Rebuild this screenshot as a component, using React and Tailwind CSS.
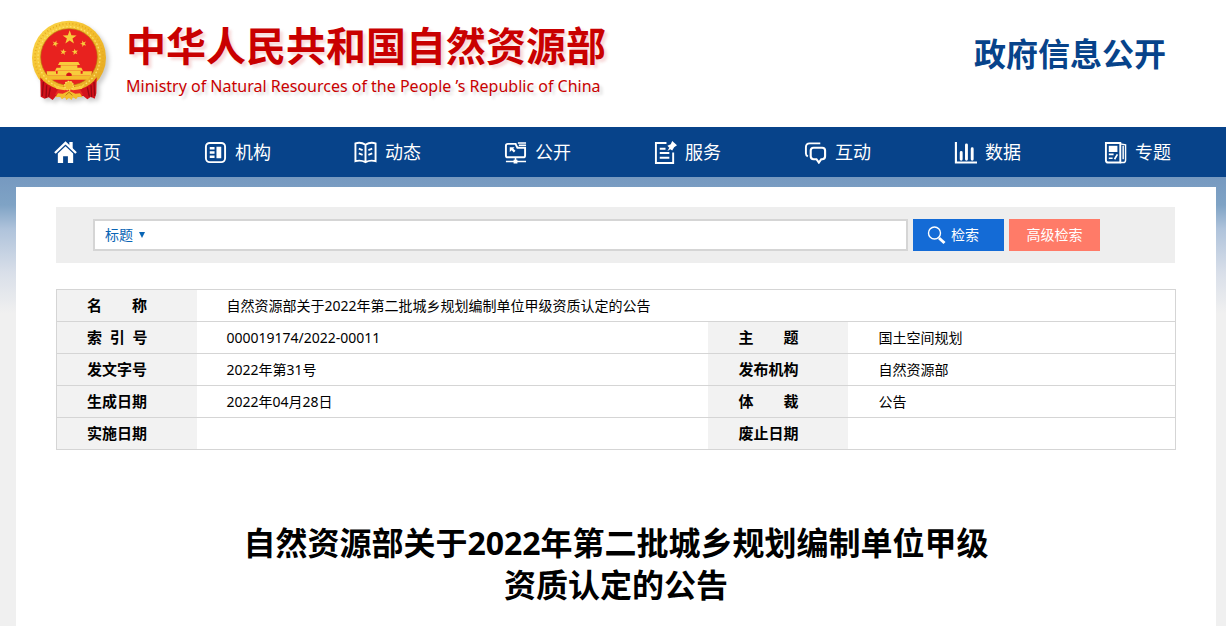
import React, { useState } from 'react';

const STAR = '0,-10 2.4,-3.2 9.5,-3.1 3.8,1.2 5.9,8.1 0,4 -5.9,8.1 -3.8,1.2 -9.5,-3.1 -2.4,-3.2';

const Emblem = () => (
  <svg className="w-20 h-[84px] shrink-0 drop-shadow-[3px_3px_2px_rgba(0,0,0,0.2)]" viewBox="30 24 240 252" aria-hidden="true">
    <defs>
      <linearGradient id="gold" x1="0" y1="0" x2="1" y2="1">
        <stop offset="0" stopColor="#fbd84a" />
        <stop offset="0.5" stopColor="#f3bd2c" />
        <stop offset="1" stopColor="#e3a522" />
      </linearGradient>
    </defs>
    <circle cx="147" cy="143" r="111" fill="url(#gold)" />
    <circle cx="147" cy="143" r="102" fill="none" stroke="#e5ab25" strokeWidth="5" strokeDasharray="3 7" />
    <circle cx="147" cy="143" r="93" fill="none" stroke="#fce06a" strokeWidth="4" strokeDasharray="5 6" />
    <circle cx="147" cy="141" r="85" fill="#e8221f" stroke="#b8780f" strokeWidth="2" />
    <polygon points={STAR} transform="translate(149 83) scale(2.2)" fill="#f8cc3c" />
    <polygon points={STAR} transform="translate(106 101) rotate(20)" fill="#f8cc3c" />
    <polygon points={STAR} transform="translate(190 101) rotate(-20)" fill="#f8cc3c" />
    <polygon points={STAR} transform="translate(130 126) rotate(10)" fill="#f8cc3c" />
    <polygon points={STAR} transform="translate(165 126) rotate(-10)" fill="#f8cc3c" />
    <path d="M119 156h56l5 9h-66z M122 166h50v8h-50z M110 173h74l5 9h-84z M113 183h69v12h-69z M80 184h28v7h80v-7h28l-3 13H82z" fill="#f8cc3c" />
    <path d="M82 198h130l-8 11H91z" fill="#f3bd2c" />
    <path d="M139 198v-6q8-9 16 0v6z" fill="#d3121b" />
    <path d="M61 202Q78 226 112 236L147 224 184 236Q216 226 230 202L229 250 224 266 213 260 202 268 190 258 147 262 108 258 98 270 86 262 74 266 62 260Z" fill="#d3121b" />
    <path d="M70 216l-3 42M80 226l-2 38M91 232l-5 28M222 216l2 42M213 226l2 36M202 232l6 28" stroke="#980811" strokeWidth="4" fill="none" />
    <path d="M113 240q34-16 68 0l8 14-22 8h-40l-22-8z" fill="#ea2a22" />
    <path d="M100 222q16 12 33 8l3-12q11-9 22 0l3 12q18 4 34-8l-10 15-26 4-12-6-12 6-25-4z" fill="#f8cc3c" />
    <circle cx="147" cy="227" r="13" fill="#f3bd2c" stroke="#fce06a" strokeWidth="4" strokeDasharray="4 4" />
    <path d="M106 262l8-12 14 1 19-9 19 9 14-1 8 12-14-2-6 8-9-7-4 9-8-6-8 6-4-9-9 7-6-8z" fill="#f3bd2c" />
    <path d="M137 256l10-9 10 9" stroke="#b8780f" strokeWidth="3" fill="none" />
  </svg>
);

const NavIcon = ({ children }) => (
  <svg className="size-[23px] shrink-0" viewBox="0 0 24 24" fill="none" stroke="white" strokeWidth="2" aria-hidden="true">
    {children}
  </svg>
);

const navItems = [
  {
    label: '首页',
    icon: (
      <>
        <path d="M1 12.500 12 2l11 10.500" strokeWidth="2.400" />
        <path d="M16 1h3.500v8L16 6z" fill="white" stroke="none" />
        <path d="M12 5.500 20 13v10h-5.500v-7h-5v7H4V13z" fill="white" stroke="none" />
      </>
    ),
  },
  {
    label: '机构',
    icon: (
      <>
        <rect x="2" y="2" width="20" height="20" rx="4" />
        <path d="M6 7.500h5M6 12h5M6 16.500h5" strokeWidth="2.500" />
        <path d="M13 6h5v12h-5z" fill="white" stroke="none" />
      </>
    ),
  },
  {
    label: '动态',
    icon: (
      <>
        <path d="M12 4Q7 0.500 1.500 2.500V21q5.500-1.500 10.500 1 5-2.500 10.500-1V2.500Q17 0.500 12 4zV22" />
        <path d="M5 8l4 1.500M5 13l4 1.500M19 8l-4 1.500M19 13l-4 1.500" />
      </>
    ),
  },
  {
    label: '公开',
    icon: (
      <>
        <path d="M13 3H4Q2 3 2 5v10q0 2 2 2h16q2 0 2-2V7h-8l-2-4" />
        <path d="M14.500 2H23M15.500 4.500H23" strokeWidth="1.600" />
        <path d="M6 6.500h5L9.700 8 12 10.300 10.300 12 8 9.700 6 11.500z" fill="white" stroke="none" />
        <path d="M12 17v4M2 21.500h21" strokeWidth="1.600" />
        <path d="M10 19.500h4v4h-4z" fill="white" stroke="none" />
      </>
    ),
  },
  {
    label: '服务',
    icon: (
      <>
        <path d="M13 2H2v21h18V12" />
        <path d="M6 8h6M6 12.500h10M6 17.500h10" />
        <path d="M19 0l5 4.500-3 2-2 3.500-2-1.500-3 2 2-3.500-2-2 3.500-1.500z" fill="white" stroke="none" />
      </>
    ),
  },
  {
    label: '互动',
    icon: (
      <>
        <path d="M17 2.500H6q-4 0-4 4V13q0 2 2 3" />
        <path d="M10 7h9q3 0 3 3v6q0 3-3 3h-1l-2.500 3.500L13 19h-3q-3 0-3-3v-6q0-3 3-3z" strokeWidth="2.200" />
      </>
    ),
  },
  {
    label: '数据',
    icon: (
      <>
        <path d="M2 1v21.500h22" strokeWidth="2.200" />
        <path d="M7.500 12v7M13 4v15M19 8v11" strokeWidth="3" strokeLinecap="round" />
      </>
    ),
  },
  {
    label: '专题',
    icon: (
      <>
        <path d="M2 2h15v20.500H4.500q-2.500 0-2.500-2.500V2z" />
        <path d="M17 3l5.500 1v16q0 2.500-2.500 2.500h-3M20 5v14" strokeWidth="1.500" />
        <path d="M5 5h9v6.500H5z" fill="white" stroke="none" />
        <path d="M5 14h5M5 18h4M11 19l3-5" strokeWidth="1.800" />
      </>
    ),
  },
];

const rows = [
  ['索\u00a0 引\u00a0 号', '000019174/2022-00011', '主　　题', '国土空间规划'],
  ['发文字号', '2022年第31号', '发布机构', '自然资源部'],
  ['生成日期', '2022年04月28日', '体　　裁', '公告'],
  ['实施日期', '', '废止日期', ''],
];

const Label = ({ children }) => (
  <th scope="row" className="bg-[#f2f2f2] pl-[30px] text-left text-[15px] font-bold">
    {children}
  </th>
);

const App = () => {
  const [keyword, setKeyword] = useState('');

  return (
    <div className="min-h-screen bg-[#f0f0f0] font-['Noto_Sans','Noto_Sans_CJK_SC',sans-serif] text-black">
      <header className="flex items-start justify-between bg-white pt-[18px] pr-[60px] pb-[25px] pl-[30px]">
        <div className="flex items-center gap-4">
          <Emblem />
          <div className="pt-1 text-[#c90000]">
            <h1 className="text-[40px] leading-[48px] font-bold whitespace-nowrap [text-shadow:3px_3px_3px_rgba(201,0,0,0.15)]">
              中华人民共和国自然资源部
            </h1>
            <p className="text-base leading-8 whitespace-nowrap [text-shadow:3px_3px_3px_rgba(0,0,0,0.15)]">
              Ministry of Natural Resources of the People ’s Republic of China
            </p>
          </div>
        </div>
        <p className="pt-4 text-[32px] leading-10 font-bold whitespace-nowrap text-[#07438a]">政府信息公开</p>
      </header>

      <nav className="bg-[#07438a] pr-2.5 pl-4">
        <ul className="grid grid-cols-8">
          {navItems.map((item) => (
            <li key={item.label}>
              <a href="#" className="flex h-[50px] items-center gap-2 pl-[38px] text-lg text-white">
                <NavIcon>{item.icon}</NavIcon>
                <span>{item.label}</span>
              </a>
            </li>
          ))}
        </ul>
      </nav>

      <div className="bg-[linear-gradient(to_bottom,#7699c0_0px,#7fa3c5_28px,#afc3db_52px,#d9dfe9_96px,#f0f0f0_136px)] pt-2.5 pr-2.5 pl-4">
        <main className="bg-white px-10 pt-5 pb-5">
          <form
            className="mr-px flex h-14 items-center bg-[#eeeeee] pr-[75px] pl-[37px]"
            onSubmit={(e) => e.preventDefault()}
          >
            <div className="flex h-8 flex-1 items-center border-2 border-[#d5d5d5] bg-white">
              <div className="relative flex items-center">
                <select
                  aria-label="检索字段"
                  className="w-14 appearance-none bg-transparent pl-2.5 text-sm text-[#0965b5] outline-none"
                >
                  <option>标题</option>
                </select>
                <svg className="pointer-events-none absolute right-1.5 h-1.5 w-1.5" viewBox="0 0 6 6" aria-hidden="true">
                  <path d="M0 0h6L3 6z" fill="#0965b5" />
                </svg>
              </div>
              <input
                type="text"
                aria-label="检索词"
                value={keyword}
                onChange={(e) => setKeyword(e.target.value)}
                className="h-full min-w-0 flex-1 px-2 text-sm outline-none"
              />
            </div>
            <button type="submit" className="ml-[5px] flex h-8 w-[91px] items-center gap-1 bg-[#146bd6] pl-3.5 text-sm text-white">
              <svg className="size-5" viewBox="0 0 20 20" fill="none" stroke="white" aria-hidden="true">
                <circle cx="7.500" cy="8" r="6" strokeWidth="1.400" />
                <path d="M12 13l5.500 5" strokeWidth="3" />
              </svg>
              检索
            </button>
            <button type="button" className="ml-[5px] h-8 w-[91px] bg-[#ff7b68] text-sm text-white">
              高级检索
            </button>
          </form>

          <table className="mt-[26px] w-full table-fixed border-collapse border border-[#d5d5d5] text-sm">
            <colgroup>
              <col className="w-[140px]" />
              <col />
              <col className="w-[140px]" />
              <col className="w-[327px]" />
            </colgroup>
            <tbody>
              <tr className="h-8 border-b border-[#d5d5d5]">
                <Label>名　　称</Label>
                <td colSpan={3} className="pl-[30px]">
                  自然资源部关于2022年第二批城乡规划编制单位甲级资质认定的公告
                </td>
              </tr>
              {rows.map(([name, value, name2, value2]) => (
                <tr key={name} className="h-8 border-b border-[#d5d5d5]">
                  <Label>{name}</Label>
                  <td className="pl-[30px]">{value}</td>
                  <Label>{name2}</Label>
                  <td className="pl-[30px]">{value2}</td>
                </tr>
              ))}
            </tbody>
          </table>

          <h2 className="mx-auto mt-[72px] max-w-[768px] text-center text-[32px] leading-[42px] font-bold">
            自然资源部关于2022年第二批城乡规划编制单位甲级资质认定的公告
          </h2>
        </main>
      </div>
    </div>
  );
};

export default App;
